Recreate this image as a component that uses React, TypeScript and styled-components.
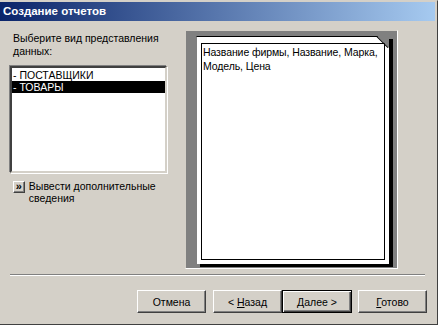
import React from 'react'
import styled, { createGlobalStyle } from 'styled-components';

const GlobalStyle = createGlobalStyle`
    html, body {
        margin: 0;
        padding: 0;
        background: #D4D0C8;
    }
    body {
        font-family: "Liberation Sans", Arial, sans-serif;
        font-size: 10.5px;
        color: #000;
    }
`;

const items = ['- ПОСТАВЩИКИ', '- ТОВАРЫ'];

const App = () => {
  return (
    <Window>
        <GlobalStyle />
        <TitleBar>Создание отчетов</TitleBar>
        <Body>
            <LeftColumn>
                <Label>Выберите вид представления данных:</Label>
                <ListBox>
                    {items.map((item, i) => (
                        <ListItem key={item} selected={i === 1}>{item}</ListItem>
                    ))}
                </ListBox>
                <MoreRow>
                    <MoreButton>»</MoreButton>
                    <MoreText>Вывести дополнительные сведения</MoreText>
                </MoreRow>
            </LeftColumn>
            <Preview>
                <Sheet>
                    <Fold />
                    <Frame>Название фирмы, Название, Марка, Модель, Цена</Frame>
                </Sheet>
            </Preview>
        </Body>
        <Separator />
        <Buttons>
            <Button><span>Отмена</span></Button>
            <Button><span>&lt; <u>Н</u>азад</span></Button>
            <Button primary><span><u>Д</u>алее &gt;</span></Button>
            <Button spaced><span><u>Г</u>отово</span></Button>
        </Buttons>
    </Window>
  )
}

export default App;

const Window = styled.div`
    width: 438px;
    height: 325px;
    box-sizing: border-box;
    background: #D4D0C8;
    border-top: 1px solid #D4D0C8;
    border-right: 1px solid #404040;
    border-bottom: 1px solid #404040;
    display: flex;
    flex-direction: column;
    overflow: hidden;
`;
const TitleBar = styled.div`
    height: 19px;
    margin: 1px 2px 0 0;
    padding-left: 3px;
    background: linear-gradient(to right, #0A246A, #A6CAF0);
    color: #fff;
    font-family: "Liberation Sans", Arial, sans-serif;
    font-weight: bold;
    font-size: 11.5px;
    line-height: 19px;
`;
const Body = styled.div`
    display: flex;
    padding: 9px 0 0 10px;
    height: 238px;
`;
const LeftColumn = styled.div`
    width: 157px;
    display: flex;
    flex-direction: column;
`;
const Label = styled.div`
    padding: 2px 0 0 3px;
    width: 150px;
    line-height: 13px;
    height: 34px;
`;
const ListBox = styled.div`
    height: 107px;
    box-sizing: border-box;
    background: #fff;
    border: 2px solid;
    border-color: #404040 #D4D0C8 #D4D0C8 #404040;
    box-shadow: -1px -1px 0 #808080, 1px 1px 0 #fff;
    padding-top: 1px;
`;
const ListItem = styled.div<{ selected?: boolean }>`
    height: 12px;
    line-height: 12px;
    padding-left: 1px;
    background: ${p => p.selected ? '#000' : 'transparent'};
    color: ${p => p.selected ? '#fff' : '#000'};
`;
const MoreRow = styled.div`
    display: flex;
    align-items: flex-start;
    margin-top: 7px;
    padding-left: 3px;
`;
const MoreButton = styled.div`
    width: 12px;
    height: 12px;
    box-sizing: border-box;
    border: 1px solid;
    border-color: #fff #404040 #404040 #fff;
    box-shadow: inset -1px -1px 0 #808080;
    font-size: 11px;
    font-weight: bold;
    line-height: 9px;
    text-align: center;
    margin-top: 1px;
`;
const MoreText = styled.div`
    margin-left: 4px;
    width: 140px;
    line-height: 12px;
`;
const Preview = styled.div`
    margin-left: 18px;
    width: 213px;
    height: 239px;
    box-sizing: border-box;
    background: #808080;
    border: 1px solid;
    border-color: #D4D0C8 #fff #fff #D4D0C8;
    padding: 5px 0 0 10px;
`;
const Sheet = styled.div`
    position: relative;
    width: 193px;
    height: 228px;
    box-sizing: border-box;
    background: #fff;
    border-top: 1px solid #000;
    border-left: 1px solid #808080;
    box-shadow: 4px 3px 0 #000;
    padding: 6px 4px 4px 4px;
`;
const Fold = styled.div`
    position: absolute;
    top: -1px;
    right: 0;
    width: 0;
    height: 0;
    border-style: solid;
    border-width: 0 12px 12px 0;
    border-color: transparent #808080 transparent transparent;
    &::after {
        content: '';
        position: absolute;
        top: 0;
        left: 0;
        width: 16px;
        height: 1px;
        background: #000;
        transform-origin: 0 0;
        transform: rotate(45deg);
    }
`;
const Frame = styled.div`
    height: 100%;
    box-sizing: border-box;
    border: 1px solid #000;
    padding: 1px 0 0 1px;
    line-height: 14px;
    letter-spacing: -0.1px;
`;
const Separator = styled.div`
    margin: 6px 12px 0 10px;
    height: 0;
    border-top: 1px solid #808080;
    border-bottom: 1px solid #fff;
`;
const Buttons = styled.div`
    display: flex;
    justify-content: flex-end;
    padding: 14px 10px 0 0;
`;
const Button = styled.div<{ primary?: boolean; spaced?: boolean }>`
    width: ${p => p.primary ? '70px' : '69px'};
    height: 23px;
    box-sizing: border-box;
    margin-left: ${p => p.primary ? '0' : p.spaced ? '6px' : '7px'};
    display: flex;
    align-items: center;
    justify-content: center;
    background: #D4D0C8;
    border: 1px solid;
    border-color: ${p => p.primary ? '#000' : '#fff #404040 #404040 #fff'};
    box-shadow: ${p => p.primary
        ? 'inset 1px 1px 0 #fff, inset -1px -1px 0 #404040, inset -2px -2px 0 #808080'
        : 'inset -1px -1px 0 #808080'};
    u {
        text-decoration: underline;
    }
`;
